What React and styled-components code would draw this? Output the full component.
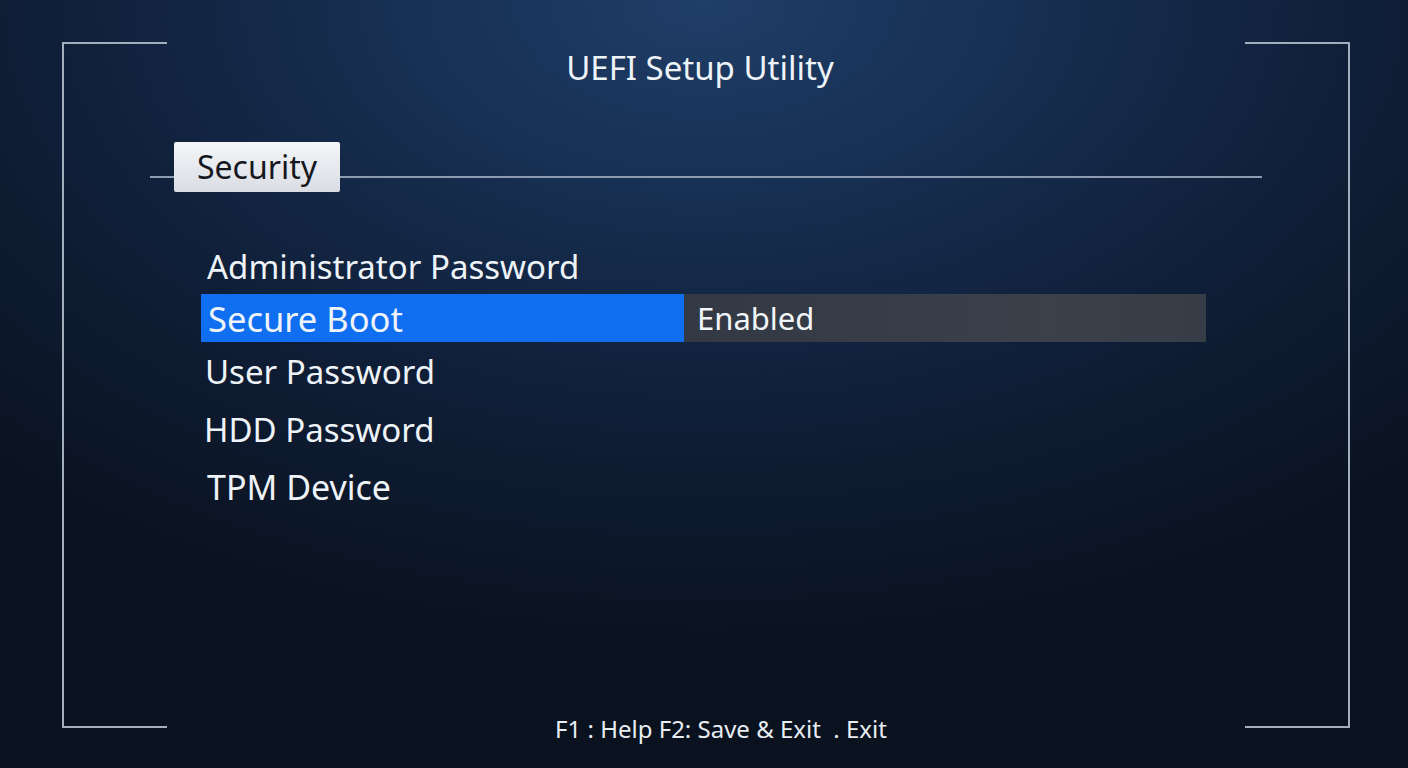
import React from "react"
import styled, { createGlobalStyle } from "styled-components"

const GlobalStyle = createGlobalStyle`
  html, body {
    margin: 0;
    padding: 0;
  }
  body {
    width: 1408px;
    height: 768px;
    overflow: hidden;
    font-family: "Noto Sans", "Open Sans", sans-serif;
    background: #0b1320;
  }
`

const Screen = styled.div`
  box-sizing: border-box;
  width: 1408px;
  height: 768px;
  padding: 42px 58px 0 62px;
  background: radial-gradient(ellipse 75% 85% at 50% 0%, #1f3e68 0%, #172f52 30%, #10203a 60%, #0a121f 100%);
`

const Frame = styled.div`
  box-sizing: border-box;
  height: 686px;
  display: flex;
  flex-direction: column;
  border-left: 2px solid #a3aebc;
  border-right: 2px solid #a3aebc;
`

const Edge = styled.div`
  display: flex;
  justify-content: space-between;
  align-items: center;
  height: 2px;
  flex-shrink: 0;
`

const Tick = styled.div`
  width: 103px;
  height: 2px;
  background: #a3aebc;
`

const Title = styled.h1`
  margin: 4px 0 0;
  padding-right: 12px;
  text-align: center;
  font-weight: 400;
  font-size: 33px;
  line-height: 40px;
  color: #eef3f8;
`

const TabRow = styled.div`
  display: flex;
  align-items: flex-start;
  margin: 54px 86px 0;
  height: 50px;
`

const TabLine = styled.div`
  height: 2px;
  margin-top: 34px;
  background: #8c9bb0;
  width: ${p => (p.$grow ? "auto" : "24px")};
  flex: ${p => (p.$grow ? "1" : "none")};
`

const Tab = styled.div`
  box-sizing: border-box;
  width: 166px;
  height: 50px;
  display: flex;
  align-items: center;
  justify-content: center;
  background: linear-gradient(#f4f6f8, #d9dde3);
  border-radius: 2px;
  color: #15181d;
  font-size: 32px;
  padding-bottom: 2px;
`

const Menu = styled.div`
  display: flex;
  flex-direction: column;
  margin: 50px 0 0 137px;
`

const Row = styled.div`
  display: flex;
  height: 48px;
  margin-top: ${p => p.$gap || 0}px;
`

const Label = styled.div`
  box-sizing: border-box;
  width: 483px;
  display: flex;
  align-items: center;
  padding-left: ${p => p.$indent ?? 6}px;
  font-size: ${p => p.$size || 33}px;
  color: #eef3f8;
  background: ${p => (p.$active ? "#0f6ff0" : "transparent")};
  border-radius: 1px;
`

const Value = styled.div`
  box-sizing: border-box;
  width: 522px;
  display: flex;
  align-items: center;
  padding-left: 13px;
  font-size: 31px;
  color: #f2f5f8;
  background: linear-gradient(90deg, #323944, #3a414b 70%, #363d47);
`

const Footer = styled.div`
  font-size: 24px;
  line-height: 30px;
  margin: 4px 0 0 30px;
  color: #e8edf2;
  white-space: pre;
`

const items = [
  { label: "Administrator Password", gap: 0, indent: 6, size: 33 },
  { label: "Secure Boot", gap: 4, indent: 7, size: 34.5, active: true, value: "Enabled" },
  { label: "User Password", gap: 5, indent: 4, size: 33 },
  { label: "HDD Password", gap: 10, indent: 3, size: 33 },
  { label: "TPM Device", gap: 10, indent: 6, size: 34 },
]

export default function App() {
  return (
    <>
      <GlobalStyle />
      <Screen>
        <Frame>
          <Edge>
            <Tick />
            <Tick />
          </Edge>
          <Title>UEFI Setup Utility</Title>
          <TabRow>
            <TabLine />
            <Tab>Security</Tab>
            <TabLine $grow />
          </TabRow>
          <Menu>
            {items.map(item => (
              <Row key={item.label} $gap={item.gap}>
                <Label $active={item.active} $indent={item.indent} $size={item.size}>
                  {item.label}
                </Label>
                {item.value && <Value>{item.value}</Value>}
              </Row>
            ))}
          </Menu>
          <div style={{ flex: 1 }} />
          <Edge>
            <Tick />
            <Footer>{"F1 : Help F2: Save & Exit  . Exit"}</Footer>
            <Tick />
          </Edge>
        </Frame>
      </Screen>
    </>
  )
}
